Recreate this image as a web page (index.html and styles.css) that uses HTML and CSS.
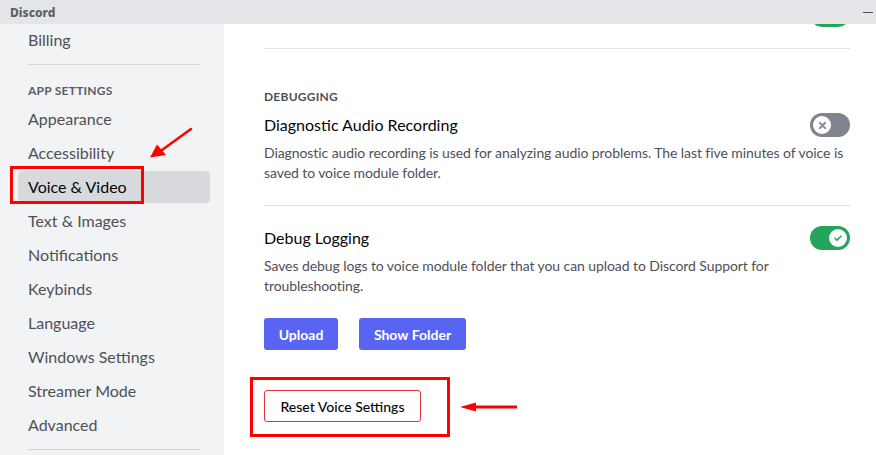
FILE: index.html
```html
<!DOCTYPE html>
<html>
<head>
<meta charset="utf-8">
<link rel="stylesheet" href="styles.css">
</head>
<body>
<div class="app">
  <div class="titlebar">
    <span class="brand">Discord</span>
    <span class="minimize"></span>
  </div>
  <div class="main">
    <nav class="sidebar">
      <div class="item">Billing</div>
      <div class="sep"></div>
      <div class="header">App Settings</div>
      <div class="item">Appearance</div>
      <div class="item">Accessibility</div>
      <div class="item selected">Voice &amp; Video</div>
      <div class="item">Text &amp; Images</div>
      <div class="item">Notifications</div>
      <div class="item">Keybinds</div>
      <div class="item">Language</div>
      <div class="item">Windows Settings</div>
      <div class="item">Streamer Mode</div>
      <div class="item">Advanced</div>
      <div class="sep"></div>
    </nav>
    <main class="content">
      <div class="row first">
        <span></span>
        <span class="toggle on"><span class="knob"><svg viewBox="0 0 20 20" width="12" height="12"><path d="M5 10.5l3.2 3L15 7" fill="none" stroke="#23a55a" stroke-width="2.6" stroke-linecap="round" stroke-linejoin="round"/></svg></span></span>
      </div>
      <div class="divider d1"></div>
      <div class="section-title">Debugging</div>
      <div class="row r1">
        <span class="title">Diagnostic Audio Recording</span>
        <span class="toggle off"><span class="knob"><svg viewBox="0 0 20 20" width="13" height="13"><path d="M6 6l8 8M14 6l-8 8" fill="none" stroke="#80848e" stroke-width="3" stroke-linecap="round"/></svg></span></span>
      </div>
      <p class="desc">Diagnostic audio recording is used for analyzing audio problems. The last five minutes of voice is saved to voice module folder.</p>
      <div class="divider d2"></div>
      <div class="row r2">
        <span class="title">Debug Logging</span>
        <span class="toggle on"><span class="knob"><svg viewBox="0 0 20 20" width="12" height="12"><path d="M5 10.5l3.2 3L15 7" fill="none" stroke="#23a55a" stroke-width="2.6" stroke-linecap="round" stroke-linejoin="round"/></svg></span></span>
      </div>
      <p class="desc">Saves debug logs to voice module folder that you can upload to Discord Support for troubleshooting.</p>
      <div class="buttons">
        <button class="btn primary upload">Upload</button>
        <button class="btn primary folder">Show Folder</button>
      </div>
      <div class="reset-wrap">
        <button class="btn danger">Reset Voice Settings</button>
      </div>
    </main>
  </div>
  <svg class="annotations" width="876" height="455" viewBox="0 0 876 455">
    <rect x="11.5" y="167.5" width="131" height="35" fill="none" stroke="#ff0000" stroke-width="3"/>
    <rect x="251.5" y="378.5" width="197" height="57" fill="none" stroke="#ff0000" stroke-width="3"/>
    <line x1="191" y1="129" x2="162" y2="150" stroke="#ff0000" stroke-width="2.5" stroke-linecap="round"/>
    <polygon points="150,157.5 157,144.5 166,155" fill="#ff0000"/>
    <line x1="517" y1="407" x2="472" y2="407" stroke="#ff0000" stroke-width="3"/>
    <polygon points="460,407 476,402.5 476,411.5" fill="#ff0000"/>
  </svg>
</div>
</body>
</html>
```
FILE: styles.css
```css
* { box-sizing: border-box; }
html, body { margin: 0; padding: 0; }
body {
  font-family: "Lato", "Noto Sans", sans-serif;
  color: #060607;
  background: #ffffff;
}
.app {
  position: relative;
  width: 876px;
  height: 455px;
  overflow: hidden;
  display: flex;
  flex-direction: column;
}
.titlebar {
  height: 24px;
  flex: none;
  background: #e3e5e8;
  display: flex;
  align-items: center;
  justify-content: space-between;
  padding: 0 3px 0 10px;
}
.brand {
  font-family: "Noto Sans", sans-serif;
  font-weight: 800;
  font-size: 12px;
  color: #5c5e66;
}
.minimize {
  width: 10px;
  height: 1px;
  background: #4e5058;
}
.main {
  flex: 1;
  display: flex;
  min-height: 0;
}
.sidebar {
  width: 224px;
  flex: none;
  background: #f2f3f5;
  padding: 0 14px 0 18px;
  overflow: hidden;
}
.item {
  height: 32px;
  margin-bottom: 2px;
  padding: 0 10px;
  font-size: 16px;
  line-height: 32px;
  color: #4e5058;
  border-radius: 4px;
  white-space: nowrap;
}
.item.selected {
  background: #d7d9dc;
  color: #060607;
}
.sep {
  height: 1px;
  margin: 8px 10px;
  background: #d5d7db;
}
.header {
  padding: 10px 10px 4px;
  font-size: 12px;
  line-height: 16px;
  font-weight: 700;
  text-transform: uppercase;
  letter-spacing: 0.02em;
  color: #5c5e66;
}
.content {
  flex: 1;
  padding: 0 26px 0 40px;
  overflow: hidden;
}
.row {
  display: flex;
  align-items: center;
  justify-content: space-between;
  height: 24px;
}
.row.first { margin-top: -21px; }
.divider { height: 1px; background: #e1e2e4; }
.d1 { margin-top: 21px; }
.section-title {
  margin-top: 40px;
  font-size: 12px;
  line-height: 16px;
  font-weight: 700;
  text-transform: uppercase;
  color: #4e5058;
  letter-spacing: 0.02em;
}
.r1 { margin-top: 8px; }
.title { font-size: 16px; line-height: 24px; color: #060607; }
.desc {
  margin: 6px 0 0;
  font-size: 14px;
  line-height: 20px;
  color: #4e5058;
  letter-spacing: -0.08px;
}
.d2 { margin-top: 22px; }
.r2 { margin-top: 20px; }
.toggle {
  width: 40px;
  height: 24px;
  border-radius: 12px;
  display: flex;
  align-items: center;
  padding: 0 3px;
}
.toggle.off { background: #80848e; justify-content: flex-start; }
.toggle.on { background: #23a55a; justify-content: flex-end; }
.knob {
  width: 18px;
  height: 18px;
  border-radius: 50%;
  background: #ffffff;
  display: flex;
  align-items: center;
  justify-content: center;
}
.buttons {
  margin-top: 22px;
  display: flex;
  gap: 21px;
}
.btn {
  height: 32px;
  padding: 0;
  border-radius: 3px;
  font-family: inherit;
  font-size: 14px;
  font-weight: 700;
  white-space: nowrap;
  text-align: center;
  cursor: pointer;
}
.primary {
  background: #5865f2;
  color: #ffffff;
  border: none;
}
.upload { width: 74px; }
.folder { width: 107px; }
.reset-wrap { margin-top: 40px; }
.danger {
  width: 157px;
  background: #ffffff;
  color: #060607;
  border: 1px solid #da373c;
  font-weight: 500;
}
.annotations {
  position: absolute;
  left: 0;
  top: 0;
  pointer-events: none;
}
```
